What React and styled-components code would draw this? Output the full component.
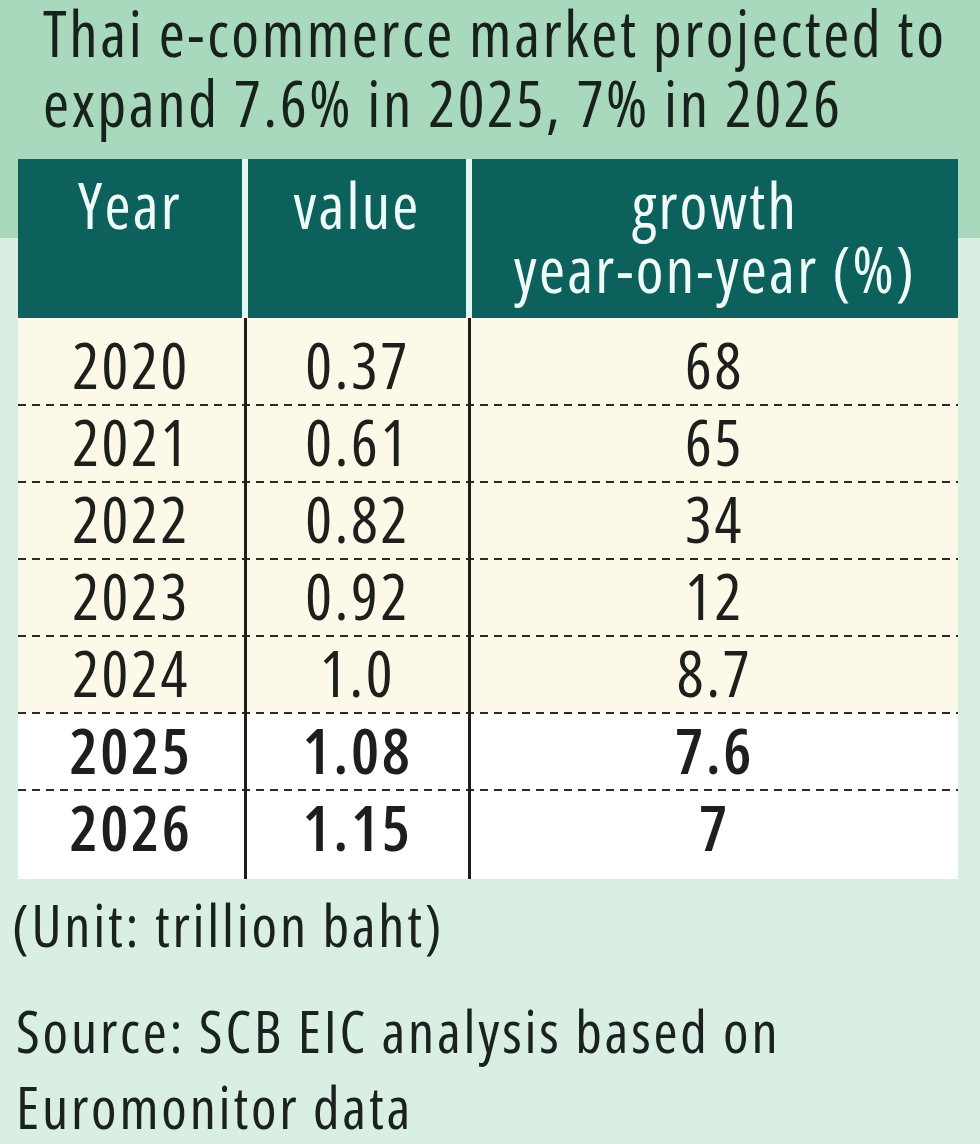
import React from 'react';
import styled, { createGlobalStyle } from 'styled-components';

const Global = createGlobalStyle`
  html, body { margin: 0; padding: 0; }
  body { background: #d9efe4; }
`;

const Page = styled.div`
  width: 980px;
  height: 1144px;
  overflow: hidden;
  background: linear-gradient(to bottom, #a9d9bd 0, #a9d9bd 238px, #d9efe4 238px);
  font-family: "Open Sans", "Liberation Sans Narrow", sans-serif;
  font-stretch: condensed;
  color: #18221d;
`;

const Title = styled.h1`
  margin: -2px 0 2px;
  padding: 0 10px 0 43px;
  font-size: 63px;
  line-height: 70px;
  font-weight: 500;
  letter-spacing: 2.6px;
  height: 159px;
  box-sizing: border-box;
  white-space: nowrap;
`;

const Table = styled.div`
  margin: 0 22px 0 18px;
`;

const HeadRow = styled.div`
  display: grid;
  grid-template-columns: 224px 218px 1fr;
  column-gap: 6px;
  background: #e4f6f0;
  height: 159px;
`;

const HeadCell = styled.div`
  background: #0c615d;
  color: #f0fbf8;
  font-size: 63px;
  line-height: 64px;
  font-weight: 500;
  letter-spacing: 2.2px;
  text-align: center;
  padding-top: 14px;
  white-space: nowrap;
`;

const Row = styled.div`
  display: grid;
  grid-template-columns: 229px 224px 1fr;
  background-color: ${p => (p.$highlight ? '#fffffd' : '#fdf9e9')};
  background-image: ${p =>
    p.$last
      ? 'none'
      : 'repeating-linear-gradient(to right, #2b2b28 0 8px, transparent 8px 14px)'};
  background-size: 100% 2px;
  background-position: left bottom;
  background-repeat: no-repeat;
`;

const Cell = styled.div`
  font-size: 63px;
  line-height: 71px;
  letter-spacing: 2.6px;
  box-sizing: border-box;
  text-align: center;
  font-weight: ${p => (p.$bold ? 600 : 400)};
  color: #1d1f1c;
  border-right: ${p => (p.$divider ? '3px solid #1d1d1b' : 'none')};
  height: ${p => (p.$first || p.$last ? '88px' : '77px')};
  padding-top: ${p => (p.$first ? '11px' : '0')};
  padding-bottom: ${p => (p.$last ? '17px' : '6px')};
`;

const Notes = styled.div`
  padding: 8px 20px 0 12px;
`;

const Note = styled.p`
  margin: 0 0 ${p => p.$gap || 0}px;
  font-size: 58px;
  line-height: 76px;
  font-weight: 400;
  letter-spacing: 2.8px;
  color: #1b211e;
  padding-left: ${p => p.$indent || 0}px;
  white-space: nowrap;
`;

const rows = [
  ['2020', '0.37', '68'],
  ['2021', '0.61', '65'],
  ['2022', '0.82', '34'],
  ['2023', '0.92', '12'],
  ['2024', '1.0', '8.7'],
  ['2025', '1.08', '7.6', true],
  ['2026', '1.15', '7', true],
];

export default function App() {
  return (
    <Page>
      <Global />
      <Title>
        Thai e-commerce market projected to
        <br />
        expand 7.6% in 2025, 7% in 2026
      </Title>
      <Table>
        <HeadRow>
          <HeadCell>Year</HeadCell>
          <HeadCell>value</HeadCell>
          <HeadCell>
            growth
            <br />
            year-on-year (%)
          </HeadCell>
        </HeadRow>
        {rows.map(([year, value, growth, bold], i) => {
          const first = i === 0;
          const last = i === rows.length - 1;
          return (
            <Row key={year} $highlight={bold} $last={last}>
              <Cell $divider $bold={bold} $first={first} $last={last}>{year}</Cell>
              <Cell $divider $bold={bold} $first={first} $last={last}>{value}</Cell>
              <Cell $bold={bold} $first={first} $last={last}>{growth}</Cell>
            </Row>
          );
        })}
      </Table>
      <Notes>
        <Note $gap={30}>(Unit: trillion baht)</Note>
        <Note $indent={4}>
          Source: SCB EIC analysis based on
          <br />
          Euromonitor data
        </Note>
      </Notes>
    </Page>
  );
}
